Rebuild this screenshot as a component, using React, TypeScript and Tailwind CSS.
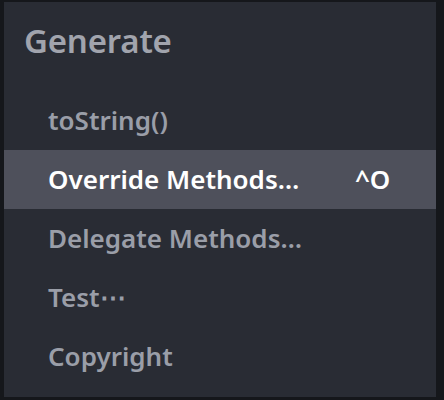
const items = [
  { label: "toString()", active: false },
  { label: "Override Methods…", active: true, shortcut: "^O" },
  { label: "Delegate Methods…", active: false },
  { label: "Test⋯", active: false },
  { label: "Copyright", active: false },
];

export default function App() {
  return (
    <div
      className="w-[444px] h-[400px] bg-[#15171b] pt-[2px] pl-[4px]"
      style={{ fontFamily: '"Noto Sans", "Open Sans", sans-serif' }}
    >
      <div className="w-[432px] h-[395px] bg-[#292c34] flex flex-col pb-[11px]">
        <div className="h-[89px] flex items-center pl-[20px] pb-[12px] text-[33px] font-semibold text-[#a1a4ad] tracking-[-0.2px]">
          Generate
        </div>
        {items.map((it) => (
          <div
            key={it.label}
            className={
              it.active
                ? "h-[59px] flex items-center pl-[44px] pb-[1px] bg-[#4e505b] text-white text-[26px] font-semibold"
                : "h-[59px] flex items-center pl-[44px] pb-[1px] text-[#9a9ea8] text-[26px] font-semibold"
            }
          >
            <span className="w-[307px]">{it.label}</span>
            {it.shortcut && <span>{it.shortcut}</span>}
          </div>
        ))}
      </div>
    </div>
  );
}
